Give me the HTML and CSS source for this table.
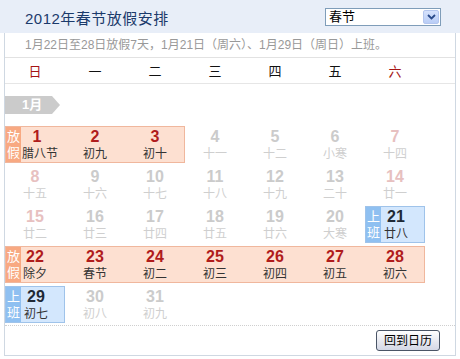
FILE: index.html
```html
<!DOCTYPE html>
<html lang="zh-CN">
<head>
<meta charset="utf-8">
<title>2012年春节放假安排</title>
<link rel="stylesheet" href="styles.css">
</head>
<body>
<div class="header">
  <div class="title">2012年春节放假安排</div>
  <div class="select">
    <span class="select-text">春节</span>
    <span class="select-btn"><svg width="9" height="6" viewBox="0 0 9 6"><path d="M1 1 L4.5 4.5 L8 1" fill="none" stroke="#2a4a8a" stroke-width="1.8"/></svg></span>
  </div>
</div>
<div class="box">
  <div class="subtitle">1月22日至28日放假7天，1月21日（周六）、1月29日（周日）上班。</div>
  <div class="weekdays">
    <span class="red">日</span><span>一</span><span>二</span><span>三</span><span>四</span><span>五</span><span class="red">六</span>
  </div>
  <div class="month"><span class="tag">1月</span></div>
  <div class="weeks">
    <div class="week">
      <div class="band span3"><span class="label">放假</span></div>
      <div class="day hol wide"><b>1</b><i>腊八节</i></div>
      <div class="day hol"><b>2</b><i>初九</i></div>
      <div class="day hol"><b>3</b><i>初十</i></div>
      <div class="day off"><b>4</b><i>十一</i></div>
      <div class="day off"><b>5</b><i>十二</i></div>
      <div class="day off"><b>6</b><i>小寒</i></div>
      <div class="day off wk"><b>7</b><i>十四</i></div>
    </div>
    <div class="week">
      <div class="day off wk"><b>8</b><i>十五</i></div>
      <div class="day off"><b>9</b><i>十六</i></div>
      <div class="day off"><b>10</b><i>十七</i></div>
      <div class="day off"><b>11</b><i>十八</i></div>
      <div class="day off"><b>12</b><i>十九</i></div>
      <div class="day off"><b>13</b><i>二十</i></div>
      <div class="day off wk"><b>14</b><i>廿一</i></div>
    </div>
    <div class="week">
      <div class="day off wk"><b>15</b><i>廿二</i></div>
      <div class="day off"><b>16</b><i>廿三</i></div>
      <div class="day off"><b>17</b><i>廿四</i></div>
      <div class="day off"><b>18</b><i>廿五</i></div>
      <div class="day off"><b>19</b><i>廿六</i></div>
      <div class="day off"><b>20</b><i>大寒</i></div>
      <div class="day work"><span class="label">上班</span><b>21</b><i>廿八</i></div>
    </div>
    <div class="week">
      <div class="band span7"><span class="label">放假</span></div>
      <div class="day hol"><b>22</b><i>除夕</i></div>
      <div class="day hol"><b>23</b><i>春节</i></div>
      <div class="day hol"><b>24</b><i>初二</i></div>
      <div class="day hol"><b>25</b><i>初三</i></div>
      <div class="day hol"><b>26</b><i>初四</i></div>
      <div class="day hol"><b>27</b><i>初五</i></div>
      <div class="day hol"><b>28</b><i>初六</i></div>
    </div>
    <div class="week">
      <div class="day work"><span class="label">上班</span><b>29</b><i>初七</i></div>
      <div class="day off"><b>30</b><i>初八</i></div>
      <div class="day off"><b>31</b><i>初九</i></div>
    </div>
  </div>
  <div class="footer"><button class="back">回到日历</button></div>
</div>
</body>
</html>
```

FILE: styles.css
```css
* { box-sizing: border-box; }
body {
  margin: 0;
  font-family: "Liberation Sans", "Noto Sans CJK SC", sans-serif;
  background: #fff;
  color: #333;
}
.header {
  height: 33px;
  background: #e8eef8;
  display: flex;
  align-items: center;
  justify-content: space-between;
  padding: 0 19px 0 25px;
}
.title {
  font-size: 15px;
  letter-spacing: 0.5px;
  color: #1b3a6b;
  margin-top: 1px;
}
.select {
  width: 116px;
  height: 18px;
  border: 1px solid #7f9db9;
  background: #fff;
  display: flex;
  align-items: center;
  justify-content: space-between;
  padding: 0 1px 0 3px;
  margin-top: 1px;
}
.select-text { font-size: 13px; color: #000; line-height: 16px; }
.select-btn {
  width: 16px;
  height: 14px;
  background: linear-gradient(#d6e2fc, #b9cdf6);
  border: 1px solid #b4c6ee;
  border-radius: 2px;
  display: flex;
  align-items: center;
  justify-content: center;
}
.box {
  margin: 0 4px;
  width: 452px;
  border: 1px solid #cfd8e2;
  border-top: none;
}
.subtitle {
  height: 25px;
  line-height: 24px;
  padding-left: 20px;
  font-size: 12px;
  color: #999;
  border-bottom: 1px solid #e2e2e2;
}
.weekdays {
  display: grid;
  grid-template-columns: repeat(7, 60px);
  height: 26px;
  border-bottom: 1px solid #e6e6e6;
  font-size: 13px;
  color: #111;
  align-items: center;
  text-align: center;
}
.weekdays .red { color: #a51414; }
.month { margin-top: 11px; height: 18px; }
.tag {
  display: inline-block;
  width: 55px;
  height: 18px;
  background: #cbcbcb;
  clip-path: polygon(0 0, 47px 0, 55px 50%, 47px 100%, 0 100%);
  color: #fff;
  font-weight: bold;
  font-size: 13px;
  line-height: 18px;
  padding-left: 17px;
}
.weeks {
  margin-top: 13px;
  display: flex;
  flex-direction: column;
  gap: 3px;
}
.week {
  display: grid;
  grid-template-columns: repeat(7, 60px);
  grid-template-rows: 37px;
}
.band {
  grid-row: 1;
  grid-column: 1 / span 3;
  background: #fde0d1;
  border: 1px solid #f0b79d;
  position: relative;
}
.band.span7 { grid-column: 1 / span 7; }
.band ~ .day:nth-child(2) { grid-column: 1; }
.band ~ .day:nth-child(3) { grid-column: 2; }
.band ~ .day:nth-child(4) { grid-column: 3; }
.band ~ .day:nth-child(5) { grid-column: 4; }
.band ~ .day:nth-child(6) { grid-column: 5; }
.band ~ .day:nth-child(7) { grid-column: 6; }
.band ~ .day:nth-child(8) { grid-column: 7; }
.band .label, .work .label {
  position: absolute;
  left: 0;
  top: 0;
  bottom: 0;
  width: 15px;
  color: #fff;
  font-size: 13px;
  line-height: 16px;
  display: flex;
  flex-direction: column;
  justify-content: center;
  text-align: center;
  word-break: break-all;
  padding: 0 1px;
}
.band .label { background: #f8a982; }
.day {
  grid-row: 1;
  position: relative;
  display: flex;
  flex-direction: column;
  align-items: center;
  padding-top: 2px;
}
.day.wide { padding-left: 4px; }
.day.wide i { margin-left: 6px; }
.day b {
  font-size: 16px;
  line-height: 18px;
  font-weight: bold;
}
.day i {
  font-style: normal;
  font-size: 12px;
  line-height: 16px;
}
.hol b { color: #b01c1c; }
.hol i { color: #333; }
.off b { color: #cbcbcb; }
.off i { color: #cfcfcf; }
.off.wk b { color: #e7c0c0; }
.work {
  background: #d3e7fd;
  border: 1px solid #9fc3ea;
  padding-top: 1px;
  padding-left: 2px;
}
.work .label { background: #8fc0f1; }
.work b { color: #1f2a36; }
.work i { color: #333; }
.footer {
  margin-top: 2px;
  border-top: 1px dotted #cfcfcf;
  padding: 4px 15px 4px 0;
  display: flex;
  justify-content: flex-end;
}
.back {
  width: 64px;
  height: 21px;
  border: 1px solid #4a5566;
  border-radius: 3px;
  background: linear-gradient(#ffffff, #e4e6ee 60%, #d4d8e6);
  font-family: "Liberation Sans", "Noto Sans CJK SC", sans-serif;
  font-size: 12px;
  color: #000;
  padding: 0;
  line-height: 18px;
}
```
